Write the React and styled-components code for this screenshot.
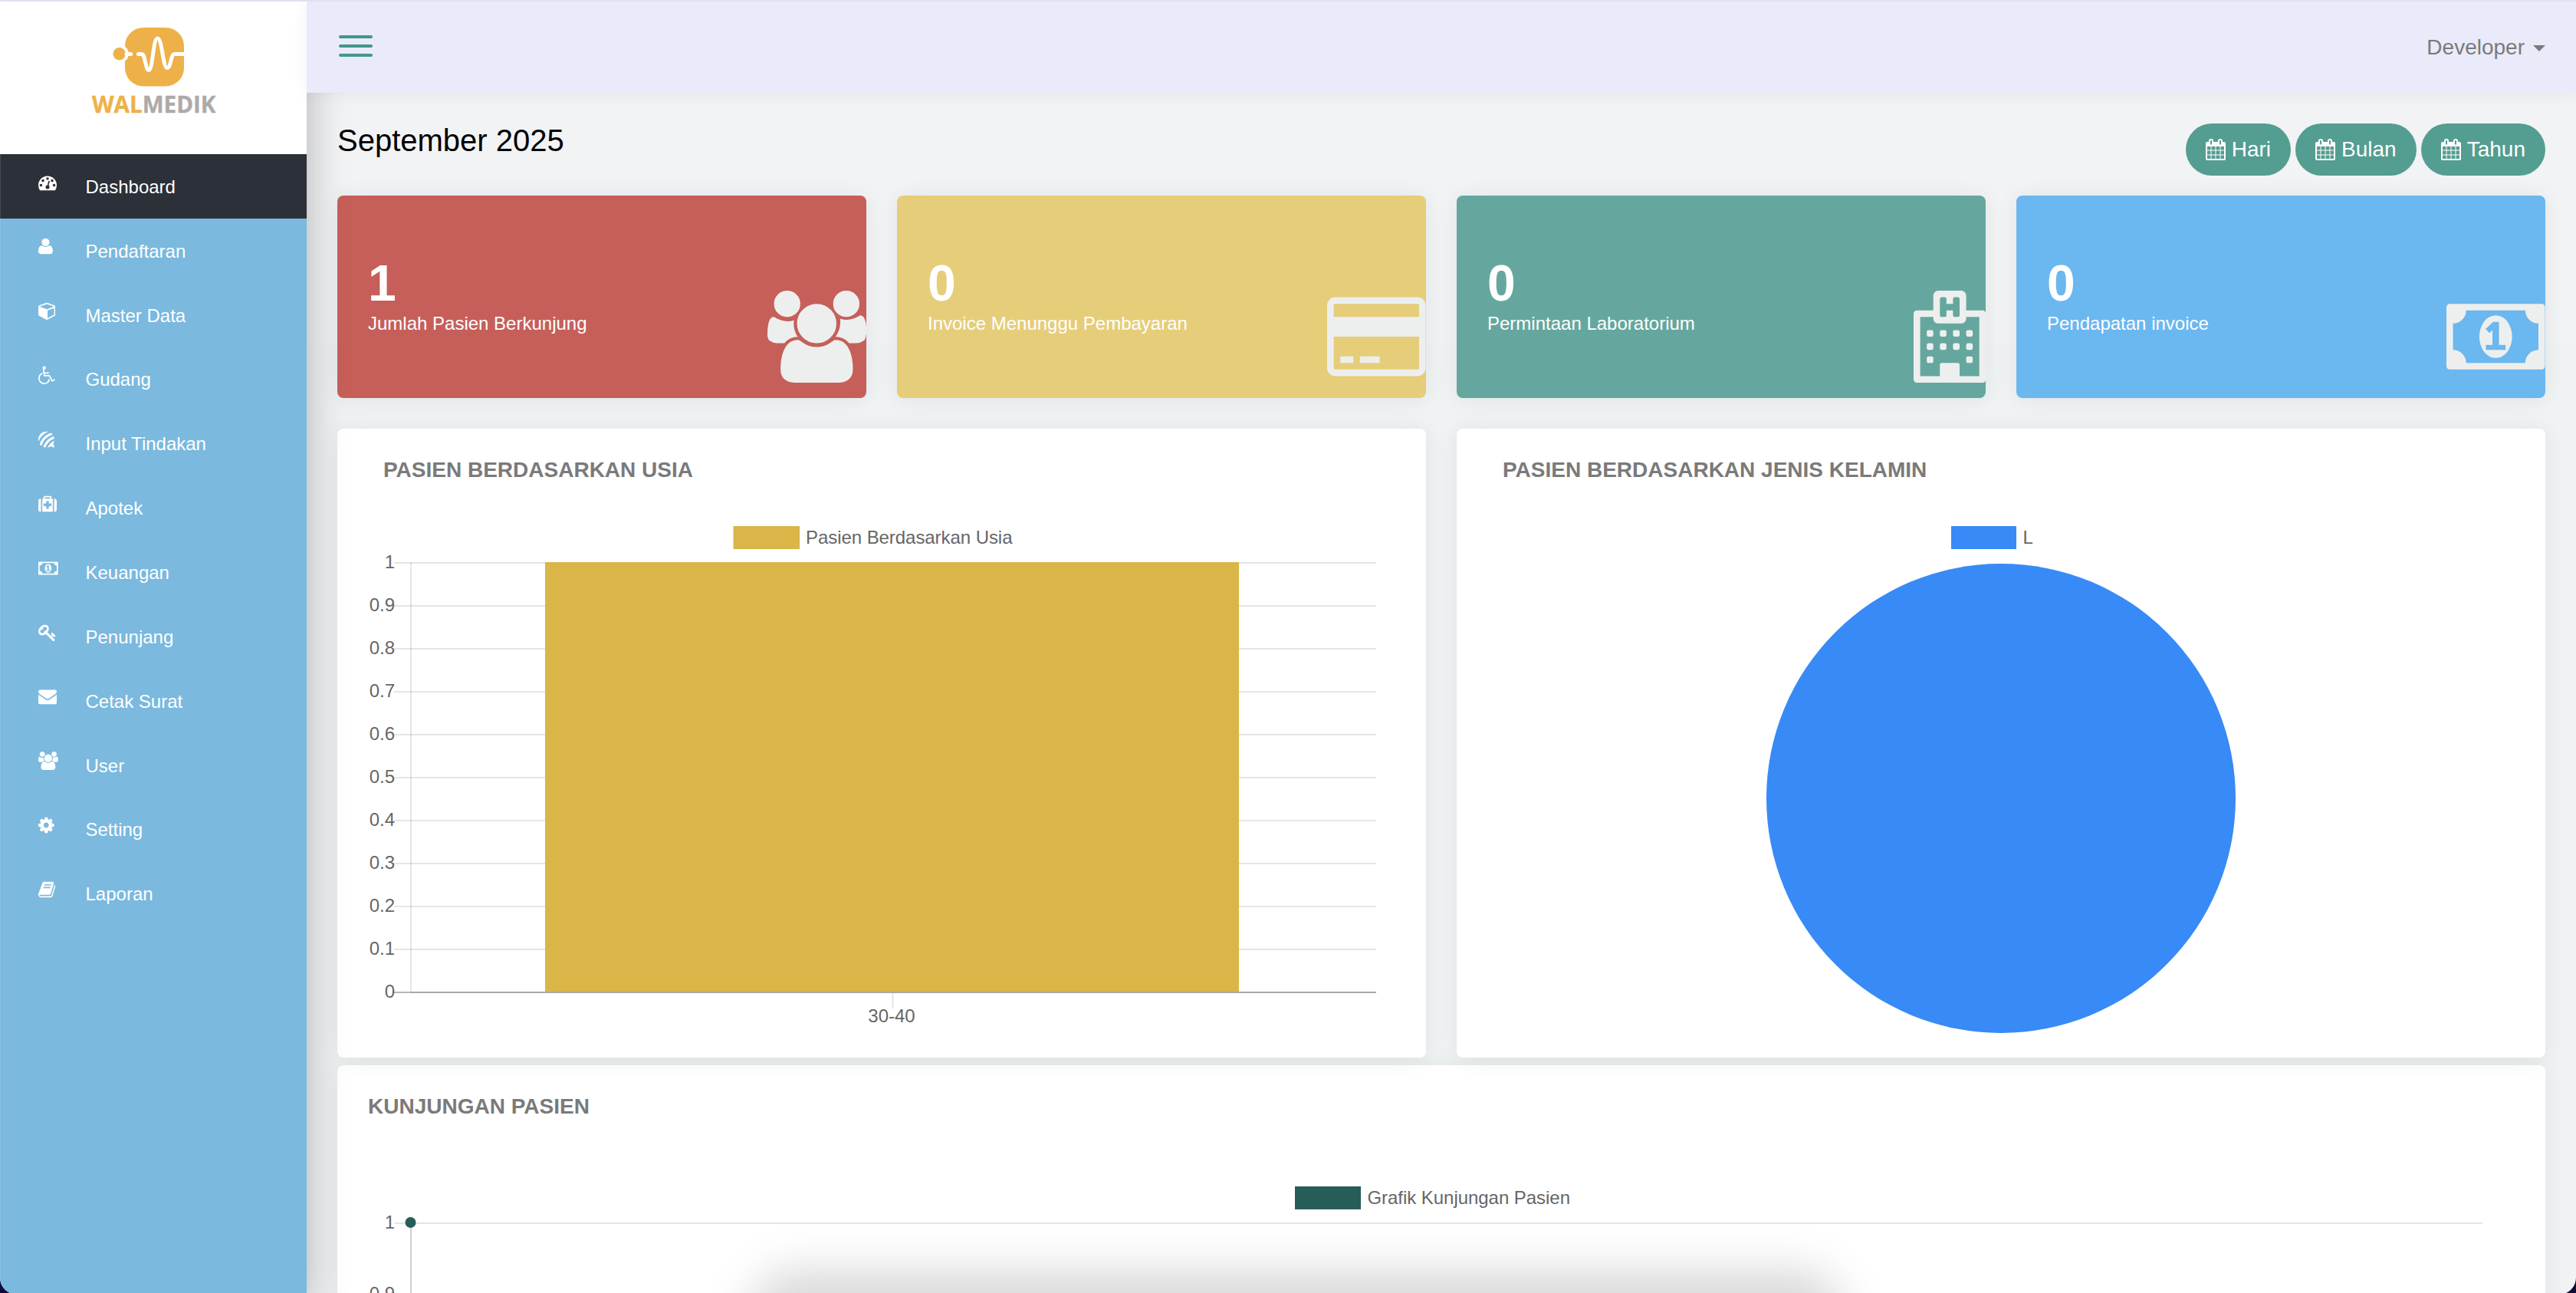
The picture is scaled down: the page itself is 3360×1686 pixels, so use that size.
import React from "react";
import styled, { createGlobalStyle } from "styled-components";

const GlobalStyle = createGlobalStyle`
  * { box-sizing: border-box; }
  html, body { margin: 0; padding: 0; background: #120a3a; overflow: hidden; }
  body { font-family: Arial, "Liberation Sans", sans-serif; color: #000; }
`;

/* ---------- icon shapes (1792 units per em) ---------- */

const shapes = {
  dashboard: { x: 0, w: 1792, d: "M384 1152q0-53-37.5-90.5t-90.5-37.5-90.5 37.5-37.5 90.5 37.5 90.5 90.5 37.5 90.5-37.5 37.5-90.5zm192-448q0-53-37.5-90.5t-90.5-37.5-90.5 37.5-37.5 90.5 37.5 90.5 90.5 37.5 90.5-37.5 37.5-90.5zm428 481l101-382q6-26-7.5-48.5t-38.5-29.5-48 6.5-30 39.5l-101 382q-60 5-107 43.5t-63 98.5q-20 77 20 146t117 89 146-20 89-117q16-60-6-117t-72-91zm660-33q0-53-37.5-90.5t-90.5-37.5-90.5 37.5-37.5 90.5 37.5 90.5 90.5 37.5 90.5-37.5 37.5-90.5zm-640-640q0-53-37.5-90.5t-90.5-37.5-90.5 37.5-37.5 90.5 37.5 90.5 90.5 37.5 90.5-37.5 37.5-90.5zm448 192q0-53-37.5-90.5t-90.5-37.5-90.5 37.5-37.5 90.5 37.5 90.5 90.5 37.5 90.5-37.5 37.5-90.5zm320 448q0 261-141 483-19 29-54 29h-1402q-35 0-54-29-141-221-141-483 0-182 71-348t191-286 286-191 348-71 348 71 286 191 191 286 71 348z" },
  user: { x: 192, w: 1408, d: "M1600 1405q0 120-73 189.5t-194 69.5h-874q-121 0-194-69.5t-73-189.5q0-53 3.5-103.5t14-109 26.5-108.5 43-97.5 62-81 85.5-53.5 111.5-20q10 0 43 21.5t73 48 107 48 135 21.5 135-21.5 107-48 73-48 43-21.5q61 0 111.5 20t85.5 53.5 62 81 43 97.5 26.5 108.5 14 109 3.5 103.5zm-320-893q0 159-112.5 271.5t-271.5 112.5-271.5-112.5-112.5-271.5 112.5-271.5 271.5-112.5 271.5 112.5 112.5 271.5z" },
  cube: { x: 0, w: 1664, d: "M896 1629l640-349v-636l-640 233v752zm-64-865l698-254-698-254-698 254zm832-252v768q0 35-18 65t-49 47l-704 384q-28 16-61 16t-61-16l-704-384q-31-17-49-47t-18-65v-768q0-40 23-73t61-47l704-256q22-8 44-8t44 8l704 256q38 14 61 47t23 73z" },
  wheelchair: { x: 0, w: 1664, d: "M1023 1187l102 204q-58 179-210 290t-339 111q-156 0-288.5-77.5t-210-210-77.5-288.5q0-181 104.5-330t274.5-211l17 131q-122 54-195 165.5t-73 244.5q0 185 131.5 316.5t316.5 131.5q126 0 232.5-65t165-175.5 49.5-236.5zM1571 1287l58 114-256 128q-13 7-29 7-40 0-57-35l-239-477h-472q-24 0-42.5-16.5t-21.5-40.5l-96-779q-2-17 6-42 14-51 57-82.5t97-31.5q66 0 113 47t47 113q0 69-52 117.5t-120 41.5l37 289h423v128h-407l16 128h455q40 0 57 35l228 455z" },
  forumbee: { x: 0, w: 448, em: 512, d: "M5.8 309.7C2 292.7 0 275.5 0 258.3 0 135 99.8 35 223.1 35c16.6 0 33.3 2 49.3 5.5C149 87.5 51.9 186 5.8 309.7zm392.9-189.2C385 103 369 87.8 350.9 75.2c-149.6 44.3-266.3 162.1-309.7 312 12.5 18.1 28 35.6 45.2 49 43.1-151.3 161.2-271.7 312.3-315.7zm15.8 252.7c15.2-25.1 25.4-53.7 29.5-82.8-79.4 42.9-145 110.6-187.6 190.3 30-4.4 58.9-15.3 84.6-31.3 35 13.1 70.9 24.3 107 33.6-9.3-36.5-20.4-74.5-33.5-109.8zm29.7-145.5c-2.6-19.5-7.9-38.7-15.8-56.8C290.5 216.7 182 327.5 137.1 466c18.1 7.6 37 12.5 56.6 15.2C240 367.1 330.5 274.4 444.2 227.7z" },
  medkit: { x: 0, w: 1792, d: "M1280 1088v-192q0-14-9-23t-23-9h-224v-224q0-14-9-23t-23-9h-192q-14 0-23 9t-9 23v224h-224q-14 0-23 9t-9 23v192q0 14 9 23t23 9h224v224q0 14 9 23t23 9h192q14 0 23-9t9-23v-224h224q14 0 23-9t9-23zm-640-704h512v-128h-512v128zm-384 0v1280h-32q-92 0-158-66t-66-158v-832q0-92 66-158t158-66h32zm1152 0v1280h-1024v-1280h128v-160q0-40 28-68t68-28h576q40 0 68 28t28 68v160h128zm384 224v832q0 92-66 158t-158 66h-32v-1280h32q92 0 158 66t66 158z" },
  money: { x: 0, w: 1920, d: "M768 1152h384v-96h-128v-448h-114l-148 137 77 80q42-37 55-57h2v288h-128v96zm512-256q0 70-21 142t-59.5 134-101.5 101-138 39-138-39-101.5-101-59.5-134-21-142 21-142 59.5-134 101.5-101 138-39 138 39 101.5 101 59.5 134 21 142zm512 256v-512q-106 0-181-75t-75-181h-1152q0 106-75 181t-181 75v512q106 0 181 75t75 181h1152q0-106 75-181t181-75zm128-832v1152q0 26-19 45t-45 19h-1792q-26 0-45-19t-19-45v-1152q0-26 19-45t45-19h1792q26 0 45 19t19 45z" },
  key: { x: 0, w: 1683, d: "M832 512q0-80-56-136t-136-56-136 56-56 136q0 42 19 83-41-19-83-19-80 0-136 56t-56 136 56 136 136 56 136-56 56-136q0-42-19-83 41 19 83 19 80 0 136-56t56-136zm851 704q0 17-49 66t-66 49q-9 0-28.5-16t-36.5-33-38.5-40-24.5-26l-96 96 220 220q28 28 28 68 0 42-39 81t-81 39q-40 0-68-28l-671-671q-176 131-365 131-163 0-265.5-102.5t-102.5-265.5q0-160 95-313t248-248 313-95q163 0 265.5 102.5t102.5 265.5q0 189-131 365l355 355 96-96q-3-3-26-24.5t-40-38.5-33-36.5-16-28.5q0-17 49-66t66-49q13 0 23 10 6 6 46 44.5t82 79.5 86.5 86 73 78 28.5 41z" },
  envelope: { x: 0, w: 1792, d: "M1792 710v794q0 66-47 113t-113 47h-1472q-66 0-113-47t-47-113v-794q44 49 101 87 362 246 497 345 57 42 92.5 65.5t94.5 48 110 24.5h2q51 0 110-24.5t94.5-48 92.5-65.5q170-123 498-345 57-39 100-87zm0-294q0 79-49 151t-122 123q-376 261-468 325-10 7-42.5 31t-54 38.5-52 32.5-57.5 27-50 9h-2q-23 0-50-9t-57.5-27-52-32.5-54-38.5-42.5-31q-91-64-262-182.5t-205-142.5q-62-42-117-115.5t-55-136.5q0-78 41.5-130t118.5-52h1472q65 0 112.5 47t47.5 113z" },
  users: { x: 64, w: 1920, d: "M657 896q-162 5-265 128h-134q-82 0-138-40.5t-56-118.5q0-353 124-353 6 0 43.5 21t97.5 42.5 119 21.5q67 0 133-23-5 37-5 66 0 159 93 286zm1071 637q0 120-73 189.5t-194 69.5h-874q-121 0-194-69.5t-73-189.5q0-53 3.5-103.5t14-109 26.5-108.5 43-97.5 62-81 85.5-53.5 111.5-20q10 0 43 21.5t73 48 107 48 135 21.5 135-21.5 107-48 73-48 43-21.5q61 0 111.5 20t85.5 53.5 62 81 43 97.5 26.5 108.5 14 109 3.5 103.5zm-1024-1277q0 106-75 181t-181 75-181-75-75-181 75-181 181-75 181 75 75 181zm704 384q0 159-112.5 271.5t-271.5 112.5-271.5-112.5-112.5-271.5 112.5-271.5 271.5-112.5 271.5 112.5 112.5 271.5zm576 225q0 78-56 118.5t-138 40.5h-134q-103-123-265-128 93-127 93-286 0-29-5-66 66 23 133 23 59 0 119-21.5t97.5-42.5 43.5-21q124 0 124 353zm-128-609q0 106-75 181t-181 75-181-75-75-181 75-181 181-75 181 75 75 181z" },
  cog: { x: 128, w: 1536, d: "M1152 896q0-106-75-181t-181-75-181 75-75 181 75 181 181 75 181-75 75-181zm512-109v222q0 12-8 23t-20 13l-185 28q-19 54-39 91 35 50 107 138 10 12 10 25t-9 23q-27 37-99 108t-94 71q-12 0-26-9l-138-108q-44 23-91 38-16 136-29 186-7 28-36 28h-222q-14 0-24.5-8.5t-11.5-21.5l-28-184q-49-16-90-37l-141 107q-10 9-25 9-14 0-25-11-126-114-165-168-7-10-7-23 0-12 8-23 15-21 51-66.5t54-70.5q-27-50-41-99l-183-27q-13-2-21-12.5t-8-23.5v-222q0-12 8-23t19-13l186-28q14-46 39-92-40-57-107-138-10-12-10-24 0-10 9-23 26-36 98.5-107.5t94.5-71.5q13 0 26 10l138 107q44-23 91-38 16-136 29-186 7-28 36-28h222q14 0 24.5 8.5t11.5 21.5l28 184q49 16 90 37l142-107q9-9 24-9 13 0 25 10 129 119 165 170 7 8 7 22 0 12-8 23-15 21-51 66.5t-54 70.5q26 50 41 98l183 28q13 2 21 12.5t8 23.5z" },
  book: { x: 64, w: 1664, d: "M1703 478q40 57 18 129l-275 906q-19 64-76.5 107.5t-122.5 43.5h-923q-77 0-148.5-53.5t-99.5-131.5q-24-67-2-127 0-4 3-27t4-37q1-8-3-21.5t-3-19.5q2-11 8-21t16.5-23.5 16.5-23.5q23-38 45-91.5t30-91.5q3-10 .5-30t-.5-28q3-11 17-28t17-23q21-36 42-92t25-90q1-9-2.5-32t.5-28q4-13 22-30.5t22-22.5q19-26 42.5-84.5t27.5-96.5q1-8-3-25.5t-2-26.5q2-8 9-18t18-23 17-21q8-12 16.5-30.5t15-35 16-36 19.5-32 26.5-23.5 36-11.5 47.5 5.5l-1 3q38-9 51-9h761q74 0 114 56t18 130l-274 906q-36 119-71.5 153.5t-128.5 34.5h-869q-27 0-38 15-11 16-1 43 24 70 144 70h923q29 0 56-15.5t35-41.5l300-987q7-22 5-57 38 15 59 43zm-1064 2q-4 13 2 22.5t20 9.5h608q13 0 25.5-9.5t16.5-22.5l21-64q4-13-2-22.5t-20-9.5h-608q-13 0-25.5 9.5t-16.5 22.5zm-83 256q-4 13 2 22.5t20 9.5h608q13 0 25.5-9.5t16.5-22.5l21-64q4-13-2-22.5t-20-9.5h-608q-13 0-25.5 9.5t-16.5 22.5z" },
  calendar: { x: 0, w: 1664, d: "M128 1664h288v-288h-288v288zm352 0h320v-288h-320v288zm-352-352h288v-320h-288v320zm352 0h320v-320h-320v320zm-352-384h288v-288h-288v288zm736 736h320v-288h-320v288zm-384-736h320v-288h-320v288zm768 736h288v-288h-288v288zm-384-352h320v-320h-320v320zm-352-864v-288q0-13-9.5-22.5t-22.5-9.5h-64q-13 0-22.5 9.5t-9.5 22.5v288q0 13 9.5 22.5t22.5 9.5h64q13 0 22.5-9.5t9.5-22.5zm736 864h288v-320h-288v320zm-384-384h320v-288h-320v288zm384 0h288v-288h-288v288zm32-480v-288q0-13-9.5-22.5t-22.5-9.5h-64q-13 0-22.5 9.5t-9.5 22.5v288q0 13 9.5 22.5t22.5 9.5h64q13 0 22.5-9.5t9.5-22.5zm384-64v1280q0 52-38 90t-90 38h-1408q-52 0-90-38t-38-90v-1280q0-52 38-90t90-38h128v-96q0-66 47-113t113-47h64q66 0 113 47t47 113v96h384v-96q0-66 47-113t113-47h64q66 0 113 47t47 113v96h128q52 0 90 38t38 90z" },
  creditCard: { x: 0, w: 1920, d: "M1760 128q66 0 113 47t47 113v1216q0 66-47 113t-113 47h-1600q-66 0-113-47t-47-113v-1216q0-66 47-113t113-47h1600zm-1600 128q-13 0-22.5 9.5t-9.5 22.5v224h1664v-224q0-13-9.5-22.5t-22.5-9.5h-1600zm1600 1280q13 0 22.5-9.5t9.5-22.5v-608h-1664v608q0 13 9.5 22.5t22.5 9.5h1600zm-1504-128v-128h256v128h-256zm384 0v-128h384v128h-384z" },
  hospital: {
    x: 0,
    w: 1408,
    evenodd: true,
    d:
      "M64 384H384V96q0-40 28-68t68-28H928q40 0 68 28t28 68V384H1344q26 0 45 19t19 45V1728q0 26-19 45t-45 19H64q-26 0-45-19t-19-45V448q0-26 19-45t45-19z" +
      "M128 512V1664H512V1440q0-13 9.5-22.5t22.5-9.5H864q13 0 22.5 9.5t9.5 22.5V1664H1280V512H1024V544q0 40-28 68t-68 28H480q-40 0-68-28t-28-68V512z" +
      "M544 128H608q13 0 22.5 9.5t9.5 22.5V256H768V160q0-13 9.5-22.5t22.5-9.5H864q13 0 22.5 9.5t9.5 22.5V480q0 13-9.5 22.5t-22.5 9.5H800q-13 0-22.5-9.5t-9.5-22.5V384H640V480q0 13-9.5 22.5t-22.5 9.5H544q-13 0-22.5-9.5t-9.5-22.5V160q0-13 9.5-22.5t22.5-9.5z" +
      [
        [256, 768], [512, 768], [768, 768], [1024, 768],
        [256, 1024], [512, 1024], [768, 1024], [1024, 1024],
        [256, 1280], [1024, 1280],
      ]
        .map(
          ([x, y]) =>
            `M${x + 32} ${y}h64q13 0 22.5 9.5t9.5 22.5v64q0 13-9.5 22.5t-22.5 9.5h-64q-13 0-22.5-9.5t-9.5-22.5v-64q0-13 9.5-22.5t22.5-9.5z`
        )
        .join(""),
  },
};

const IconSvg = styled.svg`
  display: block;
  flex: none;
  fill: currentColor;
`;

function Icon({ name, size }) {
  const s = shapes[name];
  const em = s.em || 1792;
  return (
    <IconSvg
      width={(s.w / em) * size}
      height={size}
      viewBox={`${s.x} 0 ${s.w} ${em}`}
      aria-hidden="true"
    >
      <path d={s.d} fillRule={s.evenodd ? "evenodd" : "nonzero"} />
    </IconSvg>
  );
}

/* ---------- frame ---------- */

const Viewport = styled.div`
  height: 1686px;
  overflow: hidden;
`;

const Frame = styled.div`
  position: relative;
  display: flex;
  width: 3360px;
  height: 1688px;
  padding-top: 2px;
  border-radius: 0 0 22px 22px;
  overflow: hidden;
  background: linear-gradient(#f2f3f5 0 449px, #eff3f4 449px);

  &::after {
    content: "";
    position: absolute;
    inset: 0;
    z-index: 5;
    border-top: 2px solid #e1e1ed;
    border-left: 1px solid rgba(255, 255, 255, 0.12);
    pointer-events: none;
  }
`;

const DockShadow = styled.div`
  position: absolute;
  left: 978px;
  top: 1656px;
  width: 1426px;
  height: 160px;
  border-radius: 60px;
  z-index: 4;
  background: rgba(0, 0, 0, 0.15);
  filter: blur(28px);
`;

/* ---------- sidebar ---------- */

const Sidebar = styled.aside`
  position: relative;
  z-index: 1;
  width: 400px;
  flex: none;
  background: #7bb9de;
  box-shadow: 0 16px 50px rgba(0, 0, 0, 0.28);
`;

const LogoBox = styled.div`
  height: 199px;
  display: flex;
  justify-content: center;
  background: #fff;
`;

const Nav = styled.nav`
  display: flex;
  flex-direction: column;
`;

const NavItem = styled.a`
  display: flex;
  align-items: flex-start;
  height: 83.87px;
  padding: 24.5px 0 0 50px;
  color: #fff;
  background: ${(p) => (p.$active ? "#2c3038" : "transparent")};
`;

const NavIcon = styled.span`
  width: 61.5px;
  flex: none;
`;

const NavLabel = styled.span`
  margin-top: 4.3px;
  font-size: 24px;
  line-height: 28px;
`;

/* ---------- main ---------- */

const Main = styled.div`
  flex: 1;
  min-width: 0;
  display: flex;
  flex-direction: column;
`;

const Header = styled.header`
  position: relative;
  z-index: 2;
  flex: none;
  height: 119px;
  padding: 0 40px 0 42px;
  display: flex;
  align-items: center;
  justify-content: space-between;
  background: #e9eafa;
  box-shadow: 0 2px 20px rgba(0, 0, 0, 0.06);
`;

const MenuButton = styled.div`
  display: flex;
  flex-direction: column;
  gap: 8px;
  margin-bottom: 3px;
`;

const MenuBar = styled.span`
  width: 44px;
  height: 4px;
  border-radius: 2px;
  background: #43968a;
`;

const UserMenu = styled.div`
  display: flex;
  align-items: center;
  font-size: 28px;
  line-height: 32px;
  color: #7a7a7a;
`;

const Caret = styled.span`
  margin: 2px 0 0 11px;
  border: 8px solid transparent;
  border-top-color: currentColor;
  border-bottom: 0;
`;

const Content = styled.main`
  flex: none;
  padding: 40px 40px 0;
`;

const TitleRow = styled.div`
  display: flex;
  justify-content: space-between;
  align-items: flex-start;
  margin-bottom: 26px;
`;

const Title = styled.h1`
  margin: 0;
  font-size: 40px;
  font-weight: 400;
  line-height: 44px;
`;

const ButtonGroup = styled.div`
  display: flex;
  gap: 6px;
`;

const PillButton = styled.div`
  display: flex;
  align-items: center;
  gap: 8px;
  height: 68px;
  padding: 0 26px 1px;
  border-radius: 34px;
  background: #549d91;
  color: #fff;
  font-size: 28px;
  line-height: 32px;
`;

const StatGrid = styled.div`
  display: grid;
  grid-template-columns: repeat(4, 1fr);
  gap: 40px;
  margin-bottom: 40px;
`;

const cardShadow = "0 2px 30px rgba(0, 0, 0, 0.07)";

const StatCard = styled.section`
  display: flex;
  justify-content: space-between;
  height: 264px;
  padding: 78px 0 20px 40px;
  border-radius: 8px;
  background: ${(p) => p.$color};
  box-shadow: ${cardShadow};
  color: #fff;
`;

const StatValue = styled.div`
  font-size: 66px;
  font-weight: 700;
  line-height: 72px;
`;

const StatLabel = styled.div`
  margin-top: 3px;
  font-size: 24px;
  line-height: 28px;
`;

const StatIcon = styled.div`
  align-self: flex-end;
  color: #edefee;
`;

const PanelGrid = styled.div`
  display: grid;
  grid-template-columns: 1fr 1fr;
  gap: 40px;
  margin-bottom: 10px;
`;

const Panel = styled.section`
  height: ${(p) => p.$height}px;
  padding-top: 38px;
  border-radius: 8px;
  background: #fff;
  box-shadow: ${cardShadow};
  overflow: hidden;
`;

const PanelTitle = styled.h2`
  margin: 0 0 ${(p) => p.$gap}px;
  padding-left: ${(p) => p.$indent}px;
  font-size: 28px;
  font-weight: 700;
  line-height: 32px;
  color: #7a7a7a;
`;

const Chart = styled.svg`
  display: block;
  font-family: Helvetica, "Liberation Sans", sans-serif;
  font-size: 24px;
  fill: #666;
`;

function Logo() {
  return (
    <svg width="180" height="160" viewBox="110 2 180 160" role="img" aria-label="Walmedik">
      <rect x="163" y="36" width="77" height="76.5" rx="24" fill="#eeb149" />
      <circle cx="155.7" cy="70.3" r="12" fill="#fff" />
      <circle cx="155.7" cy="70.3" r="8.2" fill="#eeb149" />
      <g fill="none" stroke="#fff" strokeWidth="5" strokeLinecap="round" strokeLinejoin="round">
        <path d="M165 70.5H170.7" />
        <path d="M180.5 70.5H184C188 70.5 188 75 189.5 81C191 87 192 91.5 194 91.5C199.500 91.5 199.500 50 205.400 50C211.500 50 212.500 88.5 218 88.5C223.500 88.5 222 70.5 228 70.5" />
        <path d="M228 70.5H240" strokeLinecap="butt" />
      </g>
      <text
        x="120"
        y="146.500"
        fontFamily="'Open Sans', sans-serif"
        fontWeight="700"
        fontSize="31"
        textLength="161.500"
        lengthAdjust="spacingAndGlyphs"
        stroke="#aeaaa9"
        strokeWidth="0.4"
        fill="#aeaaa9"
      >
        <tspan fill="#eeb149" stroke="#eeb149">WAL</tspan>MEDIK
      </text>
    </svg>
  );
}

function AgeChart() {
  const ticks = ["1", "0.9", "0.8", "0.7", "0.6", "0.5", "0.4", "0.3", "0.2", "0.1", "0"];
  return (
    <Chart width="1420" height="700" viewBox="0 0 1420 700">
      <rect x="516.500" y="26" width="86.500" height="30" fill="#dab548" />
      <text x="611" y="49" textLength="269.500">Pasien Berdasarkan Usia</text>
      {ticks.map((t, i) => (
        <g key={t}>
          <rect x="74" y={73 + i * 56} width={t === "0" ? 22 : 1281} height="2" fill={t === "0" ? "#b8b8b8" : "#e5e5e5"} />
          <text x="75" y={81 + i * 56} textAnchor="end">{t}</text>
        </g>
      ))}
      <rect x="95" y="73" width="2" height="562" fill="rgba(0,0,0,0.1)" />
      <rect x="723.500" y="635" width="2" height="20" fill="#e5e5e5" />
      <rect x="271" y="73" width="905" height="560" fill="#dab548" />
      <rect x="96" y="633" width="1259" height="2" fill="#a9a9a9" />
      <text x="723" y="673" textAnchor="middle">30-40</text>
    </Chart>
  );
}

function GenderChart() {
  return (
    <Chart width="1420" height="700" viewBox="0 0 1420 700">
      <rect x="645" y="26" width="85" height="30" fill="#388af6" />
      <text x="738.500" y="49">L</text>
      <circle cx="710" cy="381" r="306" fill="#388af6" />
    </Chart>
  );
}

function VisitChart() {
  return (
    <Chart width="2880" height="400" viewBox="0 0 2880 400">
      <rect x="1249" y="47" width="86" height="30" fill="#275d59" />
      <text x="1343.500" y="70" textLength="264.500">Grafik Kunjungan Pasien</text>
      <rect x="74" y="94" width="2724" height="2" fill="#e5e5e5" />
      <rect x="95" y="94" width="2" height="306" fill="#cfcfcf" />
      <text x="75" y="102" textAnchor="end">1</text>
      <text x="75" y="195" textAnchor="end">0.9</text>
      <circle cx="95.500" cy="94" r="7" fill="#275d59" />
    </Chart>
  );
}

const navItems = [
  ["dashboard", "Dashboard"],
  ["user", "Pendaftaran"],
  ["cube", "Master Data"],
  ["wheelchair", "Gudang"],
  ["forumbee", "Input Tindakan"],
  ["medkit", "Apotek"],
  ["money", "Keuangan"],
  ["key", "Penunjang"],
  ["envelope", "Cetak Surat"],
  ["users", "User"],
  ["cog", "Setting"],
  ["book", "Laporan"],
];

const stats = [
  { value: "1", label: "Jumlah Pasien Berkunjung", color: "#c65f5a", icon: "users" },
  { value: "0", label: "Invoice Menunggu Pembayaran", color: "#e6cd79", icon: "creditCard" },
  { value: "0", label: "Permintaan Laboratorium", color: "#65a79e", icon: "hospital" },
  { value: "0", label: "Pendapatan invoice", color: "#6bb7f0", icon: "money" },
];

export default function App() {
  return (
    <Viewport>
      <GlobalStyle />
      <Frame>
        <Sidebar>
          <LogoBox>
            <Logo />
          </LogoBox>
          <Nav>
            {navItems.map(([icon, label], i) => (
              <NavItem key={label} $active={i === 0}>
                <NavIcon>
                  <Icon name={icon} size={24} />
                </NavIcon>
                <NavLabel>{label}</NavLabel>
              </NavItem>
            ))}
          </Nav>
        </Sidebar>
        <Main>
          <Header>
            <MenuButton>
              <MenuBar />
              <MenuBar />
              <MenuBar />
            </MenuButton>
            <UserMenu>
              Developer
              <Caret />
            </UserMenu>
          </Header>
          <Content>
            <TitleRow>
              <Title>September 2025</Title>
              <ButtonGroup>
                {["Hari", "Bulan", "Tahun"].map((label) => (
                  <PillButton key={label}>
                    <Icon name="calendar" size={28} />
                    {label}
                  </PillButton>
                ))}
              </ButtonGroup>
            </TitleRow>
            <StatGrid>
              {stats.map((s) => (
                <StatCard key={s.label} $color={s.color}>
                  <div>
                    <StatValue>{s.value}</StatValue>
                    <StatLabel>{s.label}</StatLabel>
                  </div>
                  <StatIcon>
                    <Icon name={s.icon} size={120} />
                  </StatIcon>
                </StatCard>
              ))}
            </StatGrid>
            <PanelGrid>
              <Panel $height={820}>
                <PanelTitle $indent={60} $gap={31}>PASIEN BERDASARKAN USIA</PanelTitle>
                <AgeChart />
              </Panel>
              <Panel $height={820}>
                <PanelTitle $indent={60} $gap={31}>PASIEN BERDASARKAN JENIS KELAMIN</PanelTitle>
                <GenderChart />
              </Panel>
            </PanelGrid>
            <Panel $height={500}>
              <PanelTitle $indent={40} $gap={41}>KUNJUNGAN PASIEN</PanelTitle>
              <VisitChart />
            </Panel>
          </Content>
        </Main>
        <DockShadow />
      </Frame>
    </Viewport>
  );
}
